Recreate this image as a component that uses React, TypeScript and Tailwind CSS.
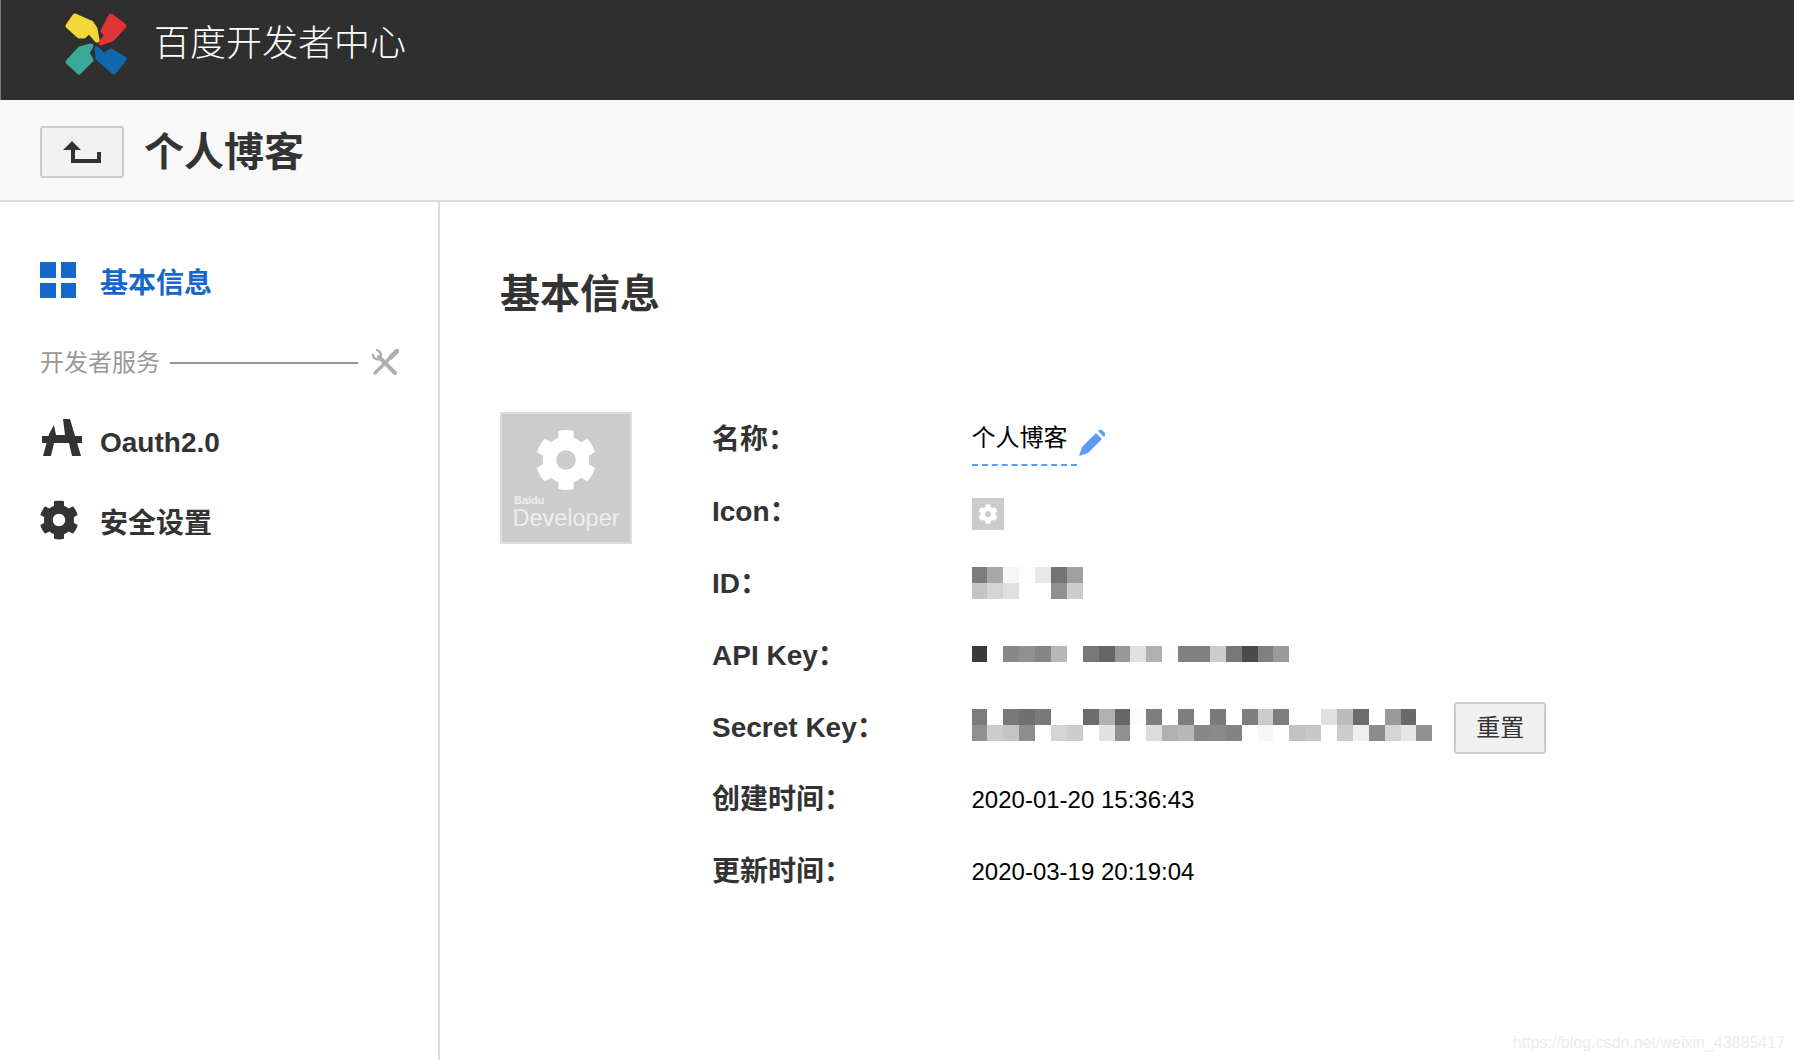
import { FaCog } from 'react-icons/fa';

// mosaic cells of the blurred-out credentials, grey level per cell ('' = nothing)
const ID_ROWS = [
  ['#7c7c7c', '#a8a8a8', '#f6f6f6', '#fdfdfd', '#e8e8e8', '#747474', '#a0a0a0'],
  ['#c4c4c4', '#d4d4d4', '#e0e0e0', '', '', '#909090', '#cccccc'],
];
const API_ROWS = [
  ['#3a3a3a', '', '#888888', '#909090', '#858585', '#b8b8b8', '', '#787878', '#666666', '#989898', '#e0e0e0', '#b0b0b0', '#fcfcfc', '#808080', '#808080', '#cccccc', '#787878', '#4a4a4a', '#808080', '#9a9a9a'],
];
const SECRET_ROWS = [
  ['#7c7c7c', '', '#787878', '#707070', '#7a7a7a', '', '', '#6c6c6c', '#b0b0b0', '#666666', '#fbfbfb', '#7e7e7e', '', '#7e7e7e', '', '#7a7a7a', '', '#7e7e7e', '#cccccc', '#7e7e7e', '', '', '#e0e0e0', '#bcbcbc', '#6c6c6c', '', '#9a9a9a', '#6a6a6a', ''],
  ['#909090', '#cccccc', '#c4c4c4', '#8e8e8e', '', '#d4d4d4', '#cccccc', '', '#e2e2e2', '#909090', '', '#dcdcdc', '#b0b0b0', '#b8b8b8', '#888888', '#8a8a8a', '#848484', '', '#f6f6f6', '', '#c2c2c2', '#c8c8c8', '', '#cccccc', '#f0f0f0', '#8c8c8c', '#d4d4d4', '#e6e6e6', '#909090'],
];

const Mosaic = ({ rows }: { rows: string[][] }) => (
  <div className="flex flex-col blur-[0.4px]">
    {rows.map((row, i) => (
      <div key={i} className="flex">
        {row.map((color, j) => (
          <div key={j} className="w-[15.9px] h-4" style={{ backgroundColor: color || 'transparent' }} />
        ))}
      </div>
    ))}
  </div>
);

const Row = ({ label, children }: { label: string; children: React.ReactNode }) => (
  <div className="flex items-center h-[72px]">
    <div className="w-[259.5px] text-[28px] font-bold text-[#333]">{label}</div>
    <div className="flex items-center text-2xl text-black">{children}</div>
  </div>
);

const Logo = () => (
  <svg className="w-16 h-16" viewBox="0 0 64 64" strokeLinejoin="round" strokeWidth={5}>
    <path d="M11 4 L27 11 L31 17 L33 28 L25 19 L20 24 L15 24 L4 14 Z" fill="#f4d83a" stroke="#f4d83a" />
    <path d="M47 4 L60 14 L48 27 L37 31 L43 23 L39 19 Z" fill="#e03434" stroke="#e03434" />
    <path d="M4 50 L16 37 L27 34 L23 41 L27 48 L15 60 Z" fill="#3ba89a" stroke="#3ba89a" />
    <path d="M33 37 L40 44 L47 39 L60 47 L50 60 L34 46 Z" fill="#1168ad" stroke="#1168ad" />
  </svg>
);

const BackIcon = () => (
  <svg className="w-[38px] h-[23px]" viewBox="0 0 38 23" fill="#333">
    <path d="M0 9 L9 0 L18 9 L12 9 L12 18 L34 18 L34 11 L38 11 L38 22 L8 22 L8 9 Z" />
  </svg>
);

const GridIcon = () => (
  <div className="grid grid-cols-2 gap-[5px] w-9 h-9">
    <div className="bg-[#1567c9]" />
    <div className="bg-[#1567c9]" />
    <div className="bg-[#1567c9]" />
    <div className="bg-[#1567c9]" />
  </div>
);

const RoadIcon = () => (
  <svg className="w-[41px] h-[40px]" viewBox="0 0 41 40" fill="#333">
    <path d="M2 38 L8 16 L13 7 L15 17 L24 17 L22 1 L29 1 L40 38 L31 38 L28 25 L13 25 L10 38 Z" />
    <path d="M1 18 L41 18 L41 25 L1 25 Z" />
  </svg>
);

const ToolsIcon = () => (
  <svg className="w-7 h-7" viewBox="0 0 28 28" fill="none" stroke="#b0b0b0" strokeLinecap="round">
    <path d="M8 8 L24 24" strokeWidth={4} />
    <path d="M2 6 Q3 11 8 10 Q11 8 9 3 L6 1" strokeWidth={2.5} />
    <path d="M4 24 L20 8" strokeWidth={3.5} />
    <path d="M20 8 L26 2" strokeWidth={5} />
  </svg>
);

const PencilIcon = () => (
  <svg className="w-[28px] h-[28px]" viewBox="0 0 28 28" fill="#5c9cf5">
    <path d="M1 27 L4 18 L18 4 L24 10 L10 24 Z" />
    <path d="M20 2 Q22 0 24 1 L27 4 Q28 6 26 8 Z" />
  </svg>
);

export default function App() {
  return (
    <div className="min-h-[1060px] flex flex-col bg-white font-['Liberation_Sans','Noto_Sans_CJK_SC',sans-serif] relative overflow-hidden">
      <header className="h-[100px] bg-[#2f2f2f] border-l border-[#777] flex items-start pl-[63px] pt-3 gap-[26px] shrink-0">
        <Logo />
        <span className="text-4xl font-light text-white leading-[60px] pt-[2px]">百度开发者中心</span>
      </header>

      <div className="h-[102px] bg-[#f8f8f8] border-b-2 border-[#ddd] flex items-center pl-10 pt-1 gap-5 shrink-0">
        <button className="w-[84px] h-[52px] bg-[#f2f2f2] border-2 border-[#ccc] rounded-[3px] flex items-center justify-center">
          <BackIcon />
        </button>
        <h1 className="text-[40px] font-bold text-[#333] leading-none">个人博客</h1>
      </div>

      <div className="flex flex-1">
        <aside className="w-[440px] shrink-0 border-r-2 border-[#ddd] pl-10 pt-[60px]">
          <div className="flex items-center gap-6 h-9">
            <GridIcon />
            <span className="text-[28px] font-bold text-[#1567c9] pt-[7px]">基本信息</span>
          </div>
          <div className="flex items-center mt-[51px] h-7">
            <span className="text-2xl text-[#999]">开发者服务</span>
            <div className="w-[188px] h-0.5 bg-[#999] ml-[10px]" />
            <div className="ml-[13px]">
              <ToolsIcon />
            </div>
          </div>
          <div className="flex items-center gap-[18px] mt-[41px] h-10 pl-px">
            <RoadIcon />
            <span className="text-[28px] font-bold text-[#333] pt-[10px]">Oauth2.0</span>
          </div>
          <div className="flex items-center gap-[21px] mt-[42px] h-10">
            <FaCog className="w-10 h-10 text-[#333] -ml-px" />
            <span className="text-[28px] font-bold text-[#333] pt-2">安全设置</span>
          </div>
        </aside>

        <main className="flex-1 pl-[60px] pt-[68px]">
          <h2 className="text-[40px] font-bold text-[#333] leading-[46px] pt-px">基本信息</h2>
          <div className="flex mt-[95px]">
            <div className="w-[132px] h-[132px] bg-[#cccccc] border-2 border-[#ddd] flex flex-col items-center shrink-0 text-[#eee]">
              <FaCog className="w-[62px] h-[62px] text-white mt-[15px]" />
              <span className="self-start ml-[12px] text-[11px] font-bold leading-3 mt-[3px]">Baidu</span>
              <span className="text-[23.5px] font-light leading-6">Developer</span>
            </div>
            <div className="ml-[80px] -mt-[8px]">
              <Row label="名称：">
                <div className="flex items-start -mt-[2px]">
                  <span className="w-[105px] h-[44px] border-b-2 border-dashed border-[#5c9cf5] -mb-[10px]">个人博客</span>
                  <div className="ml-[1px] mt-[7px]">
                    <PencilIcon />
                  </div>
                </div>
              </Row>
              <Row label="Icon：">
                <div className="w-8 h-8 mt-[3px] bg-[#cccccc] flex items-center justify-center">
                  <FaCog className="w-5 h-5 text-white" />
                </div>
              </Row>
              <Row label="ID：">
                <div className="-mt-[2px]">
                  <Mosaic rows={ID_ROWS} />
                </div>
              </Row>
              <Row label="API Key：">
                <div className="-mt-[4px]">
                  <Mosaic rows={API_ROWS} />
                </div>
              </Row>
              <Row label="Secret Key：">
                <div className="-mt-[6px]">
                  <Mosaic rows={SECRET_ROWS} />
                </div>
                <button className="ml-[22px] w-[92px] h-[52px] bg-[#f0f0f0] border-2 border-[#ccc] rounded-[3px] text-2xl text-[#333]">重置</button>
              </Row>
              <Row label="创建时间：">2020-01-20 15:36:43</Row>
              <Row label="更新时间：">2020-03-19 20:19:04</Row>
            </div>
          </div>
        </main>
      </div>

      <span className="absolute right-[9px] bottom-[5px] text-base text-[#ececec]">https://blog.csdn.net/weixin_43885417</span>
    </div>
  );
}
